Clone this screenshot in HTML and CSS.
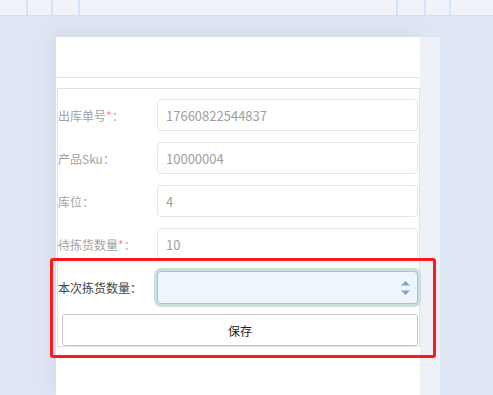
FILE: index.html
```html
<!DOCTYPE html>
<html lang="zh-CN">
<head>
    <meta charset="UTF-8">
    <meta name="viewport" content="width=device-width, initial-scale=1.0">
    <title>拣货</title>
    <link rel="stylesheet" href="styles.css">
</head>
<body>
    <div class="tabbar">
        <span class="tab t1"></span>
        <span class="tab t2"></span>
        <span class="tab t3"></span>
        <span class="tab t4"></span>
        <span class="tab t5"></span>
        <span class="tab t6"></span>
        <span class="tab t7"></span>
    </div>

    <div class="page">
        <div class="card">
            <div class="card-header"></div>
            <form class="pick-form">
                <div class="row">
                    <label class="label">出库单号<em>*</em>：</label>
                    <input class="field" type="text" value="17660822544837" readonly>
                </div>
                <div class="row">
                    <label class="label">产品Sku：</label>
                    <input class="field" type="text" value="10000004" readonly>
                </div>
                <div class="row">
                    <label class="label">库位：</label>
                    <input class="field" type="text" value="4" readonly>
                </div>
                <div class="row">
                    <label class="label">待拣货数量<em>*</em>：</label>
                    <input class="field" type="text" value="10" readonly>
                </div>
                <div class="row">
                    <label class="label active">本次拣货数量：</label>
                    <div class="field focus">
                        <span class="spin">
                            <svg width="9" height="18" viewBox="0 0 9 18">
                                <path d="M4.5 2 L9 6.5 H0 Z" fill="#78a6cf"/>
                                <path d="M0 11.5 H9 L4.5 16 Z" fill="#78a6cf"/>
                            </svg>
                        </span>
                    </div>
                </div>
                <button class="save" type="button">保存</button>
            </form>
        </div>
        <div class="side"></div>
        <!-- annotation box over the last row -->
        <div class="highlight"></div>
    </div>
</body>
</html>
```

FILE: styles.css
```css
body {
    margin: 0;
    padding: 0;
    height: 395px;
    overflow: hidden;
    background-color: #dfe6f3;
    font-family: "Noto Sans CJK SC", "Noto Sans", sans-serif;
    font-size: 12px;
    color: #333;
}
.tabbar {
    display: flex;
    height: 15px;
    background-color: #eff3f9;
    border-bottom: 1px solid #cfe0f8;
}
.tab {
    height: 15px;
    border-left: 2px solid #d3e3fa;
}
.t1 { width: 26px; border-left: none; }
.t2 { width: 23px; }
.t3 { width: 25px; }
.t4 { width: 316px; }
.t5 { width: 26px; }
.t6 { width: 23px; }
.t7 { flex: 1; }

.page {
    position: relative;
    display: flex;
    margin: 21px 0 0 56px;
    width: 384px;
    height: 358px;
}
.card {
    width: 364px;
    background-color: #fff;
    box-shadow: -4px -4px 14px rgba(120, 130, 160, 0.12);
}
.side {
    width: 20px;
    background-color: #eef2f8;
}
.card-header {
    height: 40px;
    border-bottom: 1px solid #e4e4e4;
}
.pick-form {
    margin: 10px 0 0 1px;
    border: 1px solid #e2e2e2;
    border-right-width: 1px;
    padding: 10px 0 0 0;
    display: flex;
    flex-direction: column;
    gap: 11px;
}
.row {
    display: flex;
    align-items: center;
    height: 32px;
}
.label {
    width: 99px;
    color: #a3a3a3;
    white-space: nowrap;
}
.label em {
    font-style: normal;
    color: #f98a8a;
}
.label.active {
    color: #444;
}
.field {
    box-sizing: border-box;
    width: 261px;
    height: 32px;
    border: 1px solid #e6e6e6;
    border-radius: 4px;
    padding: 0 8px;
    font-family: "Noto Sans CJK SC", "Noto Sans", sans-serif;
    font-size: 13px;
    color: #a0a0a0;
    background-color: #fff;
    outline: none;
}
.field.focus {
    position: relative;
    height: 33px;
    border-color: #9fc3e3;
    background-color: #eef5fd;
    box-shadow: 0 0 0 3px #c9e0dc;
}
.spin {
    position: absolute;
    right: 7px;
    top: 7px;
}
.save {
    box-sizing: border-box;
    margin: 0 0 0 4px;
    width: 356px;
    height: 32px;
    background-color: #fff;
    border: 1px solid #c6c6c6;
    border-radius: 3px;
    font-family: "Noto Sans CJK SC", "Noto Sans", sans-serif;
    font-size: 12px;
    color: #222;
}
.highlight {
    position: absolute;
    left: -6px;
    top: 221px;
    width: 380px;
    height: 94px;
    border: 3px solid #ff1a1a;
    border-radius: 3px;
}
```
